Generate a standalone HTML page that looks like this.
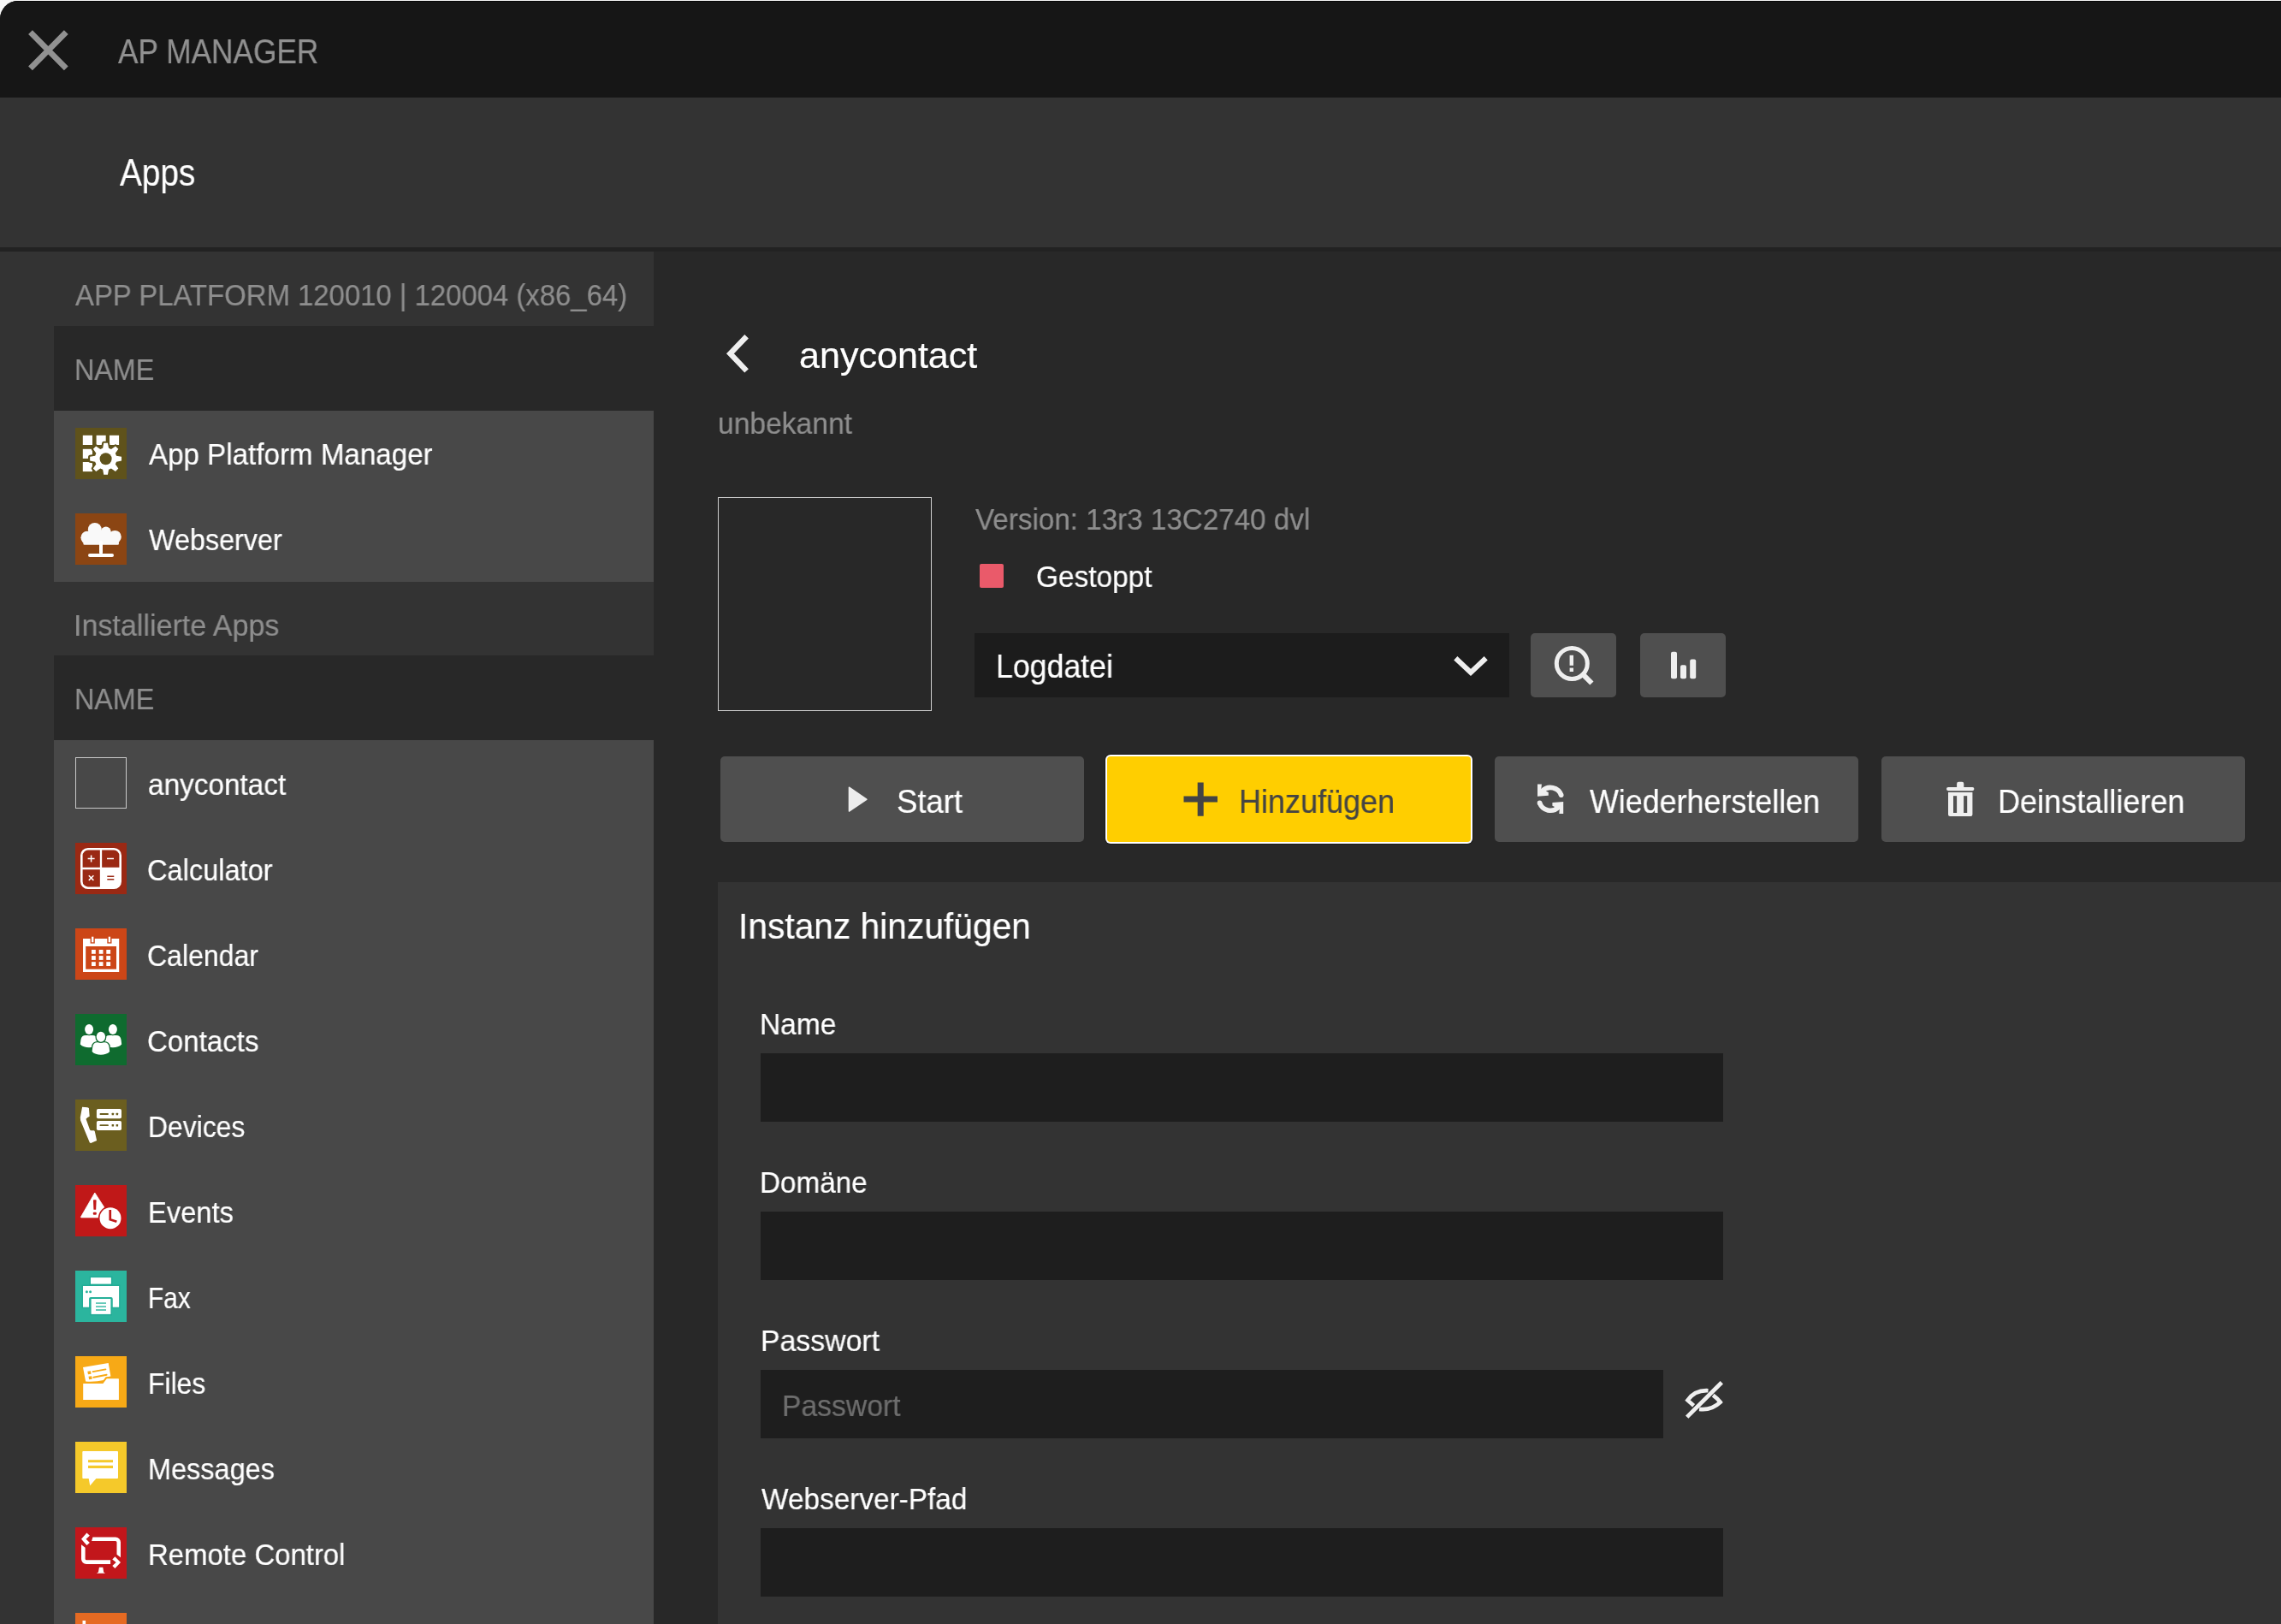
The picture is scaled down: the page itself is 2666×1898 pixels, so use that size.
<!DOCTYPE html><html lang="de"><head><meta charset="utf-8"><title>AP Manager</title><style>
html{background:#f7f7f7}
body{margin:0;width:2666px;height:1898px;overflow:hidden;position:relative;font-family:"Liberation Sans",sans-serif;background:#f7f7f7}
.win{position:absolute;left:0;top:1px;width:2666px;height:1897px;background:#282828;border-top-left-radius:21px;overflow:hidden}
.win header,.win nav,.win aside,.win main,.win section{display:contents}
.hdr,.bar,.sh,.gut,.sec,.nm,.rows{position:absolute}
.a{position:absolute}
.hdr{left:0;top:0;width:2666px;height:113px;background:#161616;box-shadow:inset 0 1px 0 #070707}
.bar{left:0;top:113px;width:2666px;height:175px;background:#333}
.sh{left:0;top:288px;width:2666px;height:5px;background:#222}
.gut{left:0;top:293px;width:63px;height:1610px;background:#333}
.sec{left:0;width:764px;background:#333}
.nm{left:63px;width:701px;background:#282828}
.rows{left:63px;width:701px;background:#484848}
.ic{position:absolute;left:88px;display:block}
.t{position:absolute;white-space:nowrap;line-height:1;transform-origin:0 0;will-change:transform;-webkit-text-stroke:.22px}
.btn{background:#4f4f4f;border-radius:5px}
.inp{background:#1e1e1e}
</style></head><body><div class="win">
<div class="hdr"></div><div class="bar"></div><div class="sh"></div><div class="gut"></div>
<header>
<svg class="a" style="left:33px;top:34px" width="48" height="48" viewBox="0 0 48 48"><path d="M2.5 2.7L44.3 44.8M44.3 2.7L2.5 44.8" stroke="#919191" stroke-width="6.8" fill="none"/></svg>
<span class="t" style="left:138.38px;top:39.81px;font-size:40.26px;color:#919191;transform:scaleX(0.8756)">AP MANAGER</span>
</header><nav><span class="t" style="left:139.68px;top:180.28px;font-size:43.60px;color:#ffffff;transform:scaleX(0.8893)">Apps</span>
</nav><aside>
<div class="sec" style="top:293px;height:87px"></div>
<div class="nm" style="top:380px;height:99px"></div>
<div class="rows" style="top:479px;height:200px"></div>
<div class="sec" style="left:63px;width:701px;top:679px;height:86px"></div>
<div class="nm" style="top:765px;height:99px"></div>
<div class="rows" style="top:864px;height:1040px"></div>
<svg class="ic" style="top:499px" viewBox="0 0 60 60" width="60" height="60"><rect width="60" height="60" fill="#5f521b"/><g fill="#fff"><rect x="8.8" y="8.8" width="11.2" height="11.2"/><rect x="24.6" y="8.8" width="11.1" height="11.2"/><rect x="40" y="8.8" width="11.1" height="11.2"/><rect x="8.8" y="24.8" width="11.2" height="11.1"/><rect x="8.8" y="40" width="11.2" height="11.1"/></g><path d="M32.15,23.77 L33.24,17.75 L37.96,17.75 L39.05,23.77 L41.95,24.97 L46.97,21.48 L50.32,24.83 L46.83,29.85 L48.03,32.75 L54.05,33.84 L54.05,38.56 L48.03,39.65 L46.83,42.55 L50.32,47.57 L46.97,50.92 L41.95,47.43 L39.05,48.63 L37.96,54.65 L33.24,54.65 L32.15,48.63 L29.25,47.43 L24.23,50.92 L20.88,47.57 L24.37,42.55 L23.17,39.65 L17.15,38.56 L17.15,33.84 L23.17,32.75 L24.37,29.85 L20.88,24.83 L24.23,21.48 L29.25,24.97Z" fill="#5f521b" stroke="#5f521b" stroke-width="4.2" stroke-linejoin="round"/><path d="M32.15,23.77 L33.24,17.75 L37.96,17.75 L39.05,23.77 L41.95,24.97 L46.97,21.48 L50.32,24.83 L46.83,29.85 L48.03,32.75 L54.05,33.84 L54.05,38.56 L48.03,39.65 L46.83,42.55 L50.32,47.57 L46.97,50.92 L41.95,47.43 L39.05,48.63 L37.96,54.65 L33.24,54.65 L32.15,48.63 L29.25,47.43 L24.23,50.92 L20.88,47.57 L24.37,42.55 L23.17,39.65 L17.15,38.56 L17.15,33.84 L23.17,32.75 L24.37,29.85 L20.88,24.83 L24.23,21.48 L29.25,24.97Z" fill="#fff"/><circle cx="35.6" cy="36.2" r="7" fill="#5f521b"/></svg>
<svg class="ic" style="top:599px" viewBox="0 0 60 60" width="60" height="60"><rect width="60" height="60" fill="#8b4513"/><g fill="#f9f9f9"><circle cx="14" cy="28.3" r="7.6"/><circle cx="22.8" cy="18.9" r="8"/><circle cx="35.8" cy="21.3" r="5.9"/><circle cx="46.3" cy="27.4" r="7.5"/><rect x="9.4" y="27" width="41.5" height="9.8" rx="1.3"/><rect x="20" y="20" width="20" height="12"/><rect x="12" y="26" width="36" height="8"/></g><g fill="#fff"><rect x="28" y="32" width="4" height="16" rx="2"/><rect x="15" y="46.9" width="30" height="4" rx="2"/></g></svg>
<div class="a" style="left:88px;top:884px;width:58px;height:58px;border:1px solid #c9c9c9"></div>
<svg class="ic" style="top:984px" viewBox="0 0 60 60" width="60" height="60"><rect width="60" height="60" fill="#9a2914"/><path d="M30 30H52.7V45.5a7.2 7.2 0 0 1-7.2 7.2H30Z" fill="#fff"/><rect x="7.3" y="7.3" width="45.4" height="45.4" rx="7.5" fill="none" stroke="#fff" stroke-width="2.6"/><path d="M30 7V53M7 30H53" stroke="#fff" stroke-width="2.3"/><path d="M14.6 18.6h8M18.6 14.6v8M37 18.6h8M15.8 38.3l5.6 5.6M21.4 38.3l-5.6 5.6" stroke="#fff" stroke-width="1.5" fill="none"/><path d="M37.3 39.2h8M37.3 42.8h8" stroke="#9a2914" stroke-width="1.6"/></svg>
<svg class="ic" style="top:1084px" viewBox="0 0 60 60" width="60" height="60"><rect width="60" height="60" fill="#cc4617"/><rect x="9" y="12" width="42.2" height="39" fill="#fff"/><rect x="12.2" y="21" width="35.8" height="26.7" fill="#cc4617"/><g fill="#fff"><rect x="19.0" y="25.0" width="4.8" height="4.8"/><rect x="27.7" y="25.0" width="4.8" height="4.8"/><rect x="36.3" y="25.0" width="4.8" height="4.8"/><rect x="19.0" y="32.1" width="4.8" height="4.8"/><rect x="27.7" y="32.1" width="4.8" height="4.8"/><rect x="36.3" y="32.1" width="4.8" height="4.8"/><rect x="19.0" y="39.2" width="4.8" height="4.8"/><rect x="27.7" y="39.2" width="4.8" height="4.8"/><rect x="36.3" y="39.2" width="4.8" height="4.8"/></g><rect x="17.6" y="9.6" width="5.2" height="8" fill="#cc4617"/><rect x="37.3" y="9.6" width="5.2" height="8" fill="#cc4617"/><rect x="19" y="9.7" width="2.4" height="6.6" fill="#fff"/><rect x="38.7" y="9.7" width="2.4" height="6.6" fill="#fff"/></svg>
<svg class="ic" style="top:1184px" viewBox="0 0 60 60" width="60" height="60"><rect width="60" height="60" fill="#0f6b2f"/><path d="M12.1 24.9C9.1 24.9 6.8 26.7 6.4 30.4L5.8 35.5C10.1 40.6 22.1 40.6 26.4 35.5L25.8 30.4C25.4 26.7 23.1 24.9 20.1 24.9Z" fill="#fff"/><ellipse cx="16.1" cy="18.0" rx="6.3" ry="7.3" fill="#0f6b2f"/><ellipse cx="16.1" cy="18.0" rx="5.0" ry="6.0" fill="#fff"/><path d="M39.9 24.9C36.9 24.9 34.6 26.7 34.2 30.4L33.6 35.5C37.9 40.6 49.9 40.6 54.2 35.5L53.6 30.4C53.2 26.7 50.9 24.9 47.9 24.9Z" fill="#fff"/><ellipse cx="43.9" cy="18.0" rx="6.3" ry="7.3" fill="#0f6b2f"/><ellipse cx="43.9" cy="18.0" rx="5.0" ry="6.0" fill="#fff"/><path d="M25.9 33.3C22.9 33.3 20.6 35.1 20.2 38.8L19.6 43.9C23.9 49.0 35.9 49.0 40.2 43.9L39.6 38.8C39.2 35.1 36.9 33.3 33.9 33.3Z" fill="#0f6b2f" stroke="#0f6b2f" stroke-width="2.6"/><path d="M25.9 33.3C22.9 33.3 20.6 35.1 20.2 38.8L19.6 43.9C23.9 49.0 35.9 49.0 40.2 43.9L39.6 38.8C39.2 35.1 36.9 33.3 33.9 33.3Z" fill="#fff"/><ellipse cx="29.9" cy="26.8" rx="6.5" ry="7.3" fill="#0f6b2f"/><ellipse cx="29.9" cy="26.8" rx="5.2" ry="6.0" fill="#fff"/></svg>
<svg class="ic" style="top:1284px" viewBox="0 0 60 60" width="60" height="60"><rect width="60" height="60" fill="#6b5e1f"/><path d="M8.1 8.8L14.2 9.2L15.9 10L16.7 19.7L14.4 21.1L12.5 22.8L16.9 34.9Q17.5 36.2 18.6 36.2H22L22.8 37.2L25.1 47.9L18.2 51.1L16.9 50.4L6.1 24.5L5.8 21.1Z" fill="#fff"/><g fill="#fff"><rect x="24.9" y="11.1" width="29.1" height="11.1" rx="1.8"/><rect x="24.9" y="24.9" width="29.1" height="11.1" rx="1.8"/></g><g fill="#6b5e1f"><rect x="28.5" y="16" width="10.4" height="1.9" rx=".9"/><rect x="28.5" y="29.2" width="10.4" height="1.9" rx=".9"/><rect x="42.6" y="15.7" width="2.5" height="2.5" rx=".5"/><rect x="47.6" y="15.7" width="2.5" height="2.5" rx=".5"/><rect x="42.6" y="28.9" width="2.5" height="2.5" rx=".5"/><rect x="47.6" y="28.9" width="2.5" height="2.5" rx=".5"/></g></svg>
<svg class="ic" style="top:1384px" viewBox="0 0 60 60" width="60" height="60"><rect width="60" height="60" fill="#c01818"/><path d="M22.8 9L6.5 37.2Q6.2 37.9 7 37.9H41.5Z" fill="#fff" stroke="#fff" stroke-width=".8" stroke-linejoin="round"/><path d="M21 17.9Q21 17.3 21.6 17.3H24Q24.6 17.3 24.6 17.9L24.2 28.3Q24.2 28.8 23.7 28.8H21.9Q21.4 28.8 21.4 28.3Z" fill="#c01818"/><rect x="20.8" y="31.7" width="4" height="3.1" rx="1" fill="#c01818"/><circle cx="41" cy="38.7" r="14.2" fill="#c01818"/><circle cx="41" cy="38.7" r="12.5" fill="#fff"/><path d="M40.75 29.1V40.2L48.4 42.8" fill="none" stroke="#c01818" stroke-width="2.7"/></svg>
<svg class="ic" style="top:1484px" viewBox="0 0 60 60" width="60" height="60"><rect width="60" height="60" fill="#2bb59e"/><g fill="none" stroke="#149f89" stroke-opacity=".33" stroke-width="3"><rect x="18" y="8.1" width="23.9" height="7.5"/><rect x="9" y="18" width="42.1" height="24.7"/><rect x="18.6" y="40" width="22.8" height="10.9"/></g><g fill="#fff"><rect x="18" y="8.1" width="23.9" height="7.5"/><rect x="9" y="18" width="42.1" height="24.7"/></g><path d="M16.1 42.9V33a2.1 2.1 0 0 1 2.1-2.1H41.6A2.1 2.1 0 0 1 43.7 33V42.9Z" fill="#2bb59e"/><path d="M16.1 42.9V33a2.1 2.1 0 0 1 2.1-2.1H41.6A2.1 2.1 0 0 1 43.7 33V42.9Z" fill="#149f89" fill-opacity=".22"/><rect x="18.6" y="33" width="22.8" height="17.9" fill="#fff"/><g fill="#2bb59e" fill-opacity=".8"><rect x="24" y="37.2" width="12" height="1.7"/><rect x="24" y="41.2" width="12" height="1.7"/><rect x="24" y="45.1" width="12" height="1.8"/></g><g fill="#2bb59e"><circle cx="13.4" cy="24.8" r="1.5"/><circle cx="17.6" cy="24.8" r="1.5"/></g></svg>
<svg class="ic" style="top:1584px" viewBox="0 0 60 60" width="60" height="60"><rect width="60" height="60" fill="#f7a916"/><path d="M9 13L38.7 7.9L41.4 23.6L35.4 24.5L33.1 28Q24 30.2 12.1 29.5Z" fill="#fff"/><path d="M20.5 18.1L35.4 15.4M21.3 24.7L36.6 21.7" stroke="#f7a916" stroke-width="1.9" stroke-linecap="round"/><path d="M14.3 17.8l3.6-.65.65 3.5-3.6.65ZM15.5 23.8l3.6-.65.65 3.5-3.6.65Z" fill="#f7a916"/><path d="M7.5 30.3H31.5L35.9 24.5H52.5V52.5H7.5Z" fill="#f7a916"/><path d="M9.2 32H32.4L36.8 26.2H50.3a.6.6 0 0 1 .6.6V50.9H9.2Z" fill="#fff"/></svg>
<svg class="ic" style="top:1684px" viewBox="0 0 60 60" width="60" height="60"><rect width="60" height="60" fill="#f5c92a"/><path d="M9.3 11H49a1 1 0 0 1 1 1V42a1 1 0 0 1-1 1H24.4L17.2 51.3L15.7 43H9.3a1 1 0 0 1-1-1V12a1 1 0 0 1 1-1Z" fill="#fff"/><rect x="15" y="21.2" width="29" height="3" fill="#f5c92a"/><rect x="15" y="27.8" width="29" height="3.2" fill="#f5c92a"/></svg>
<svg class="ic" style="top:1784px" viewBox="0 0 60 60" width="60" height="60"><rect width="60" height="60" fill="#c2161b"/><g fill="#fff"><path d="M13.4 6.6L16.9 9.7L12.5 13.8L16.9 18L13.4 21.1L7 13.8Z"/><path d="M20.4 11.4H47A6 6 0 0 1 53 17.4V35.2L48.5 31.7V17.4A1.5 1.5 0 0 0 47 15.9H19.1Z"/><path d="M7 20.3L11.6 23.8V36.8A1.5 1.5 0 0 0 13.1 38.3H41.1V43H13A6 6 0 0 1 7 37Z"/><path d="M46.4 34.3L43.3 37.4L47.7 41L43.3 44.9L46.4 48L53 41Z"/><path d="M27.9 46.7H32.3L33.2 52.4L35 53.7H24.8L26.9 52.4Z"/></g></svg>
<svg class="ic" style="top:1884px" viewBox="0 0 60 60" width="60" height="60"><rect width="60" height="60" fill="#e56a22"/><rect x="8.5" y="9" width="3.6" height="40" fill="#fff"/></svg>
<span class="t" style="left:88.19px;top:326.69px;font-size:34.74px;color:#8e8e8e;transform:scaleX(0.9465)">APP PLATFORM 120010 | 120004 (x86_64)</span>
<span class="t" style="left:87.28px;top:414.03px;font-size:34.45px;color:#8e8e8e;transform:scaleX(0.9376)">NAME</span>
<span class="t" style="left:173.99px;top:512.63px;font-size:34.45px;color:#ffffff;transform:scaleX(0.9626)">App Platform Manager</span>
<span class="t" style="left:174.46px;top:612.63px;font-size:34.45px;color:#ffffff;transform:scaleX(0.9387)">Webserver</span>
<span class="t" style="left:85.83px;top:712.69px;font-size:34.74px;color:#8e8e8e;transform:scaleX(0.9807)">Installierte Apps</span>
<span class="t" style="left:87.28px;top:799.33px;font-size:34.45px;color:#8e8e8e;transform:scaleX(0.9376)">NAME</span>
<span class="t" style="left:172.64px;top:898.53px;font-size:34.45px;color:#ffffff;transform:scaleX(0.9680)">anycontact</span>
<span class="t" style="left:172.02px;top:998.63px;font-size:34.45px;color:#ffffff;transform:scaleX(0.9456)">Calculator</span>
<span class="t" style="left:172.05px;top:1098.73px;font-size:34.45px;color:#ffffff;transform:scaleX(0.9303)">Calendar</span>
<span class="t" style="left:172.00px;top:1198.63px;font-size:34.45px;color:#ffffff;transform:scaleX(0.9601)">Contacts</span>
<span class="t" style="left:173.01px;top:1298.63px;font-size:34.45px;color:#ffffff;transform:scaleX(0.9256)">Devices</span>
<span class="t" style="left:172.95px;top:1398.73px;font-size:34.45px;color:#ffffff;transform:scaleX(0.9495)">Events</span>
<span class="t" style="left:173.17px;top:1498.63px;font-size:34.45px;color:#ffffff;transform:scaleX(0.8647)">Fax</span>
<span class="t" style="left:173.01px;top:1598.63px;font-size:34.45px;color:#ffffff;transform:scaleX(0.9246)">Files</span>
<span class="t" style="left:172.96px;top:1698.63px;font-size:34.45px;color:#ffffff;transform:scaleX(0.9426)">Messages</span>
<span class="t" style="left:172.83px;top:1798.83px;font-size:34.45px;color:#ffffff;transform:scaleX(0.9557)">Remote Control</span>
</aside><main>
<svg class="a" style="left:840px;top:384px" width="44" height="56" viewBox="840 385 44 56"><path d="M872.6 393.2L853.4 413.3L872.6 433.4" stroke="#efefef" stroke-width="6.4" fill="none"/></svg>
<div class="a" style="left:839px;top:580px;width:248px;height:248px;border:1px solid #cfcfcf"></div>
<div class="a" style="left:1145px;top:658px;width:28px;height:28px;background:#ea5a6a;border-radius:2px"></div>
<div class="a" style="left:1139px;top:739px;width:625px;height:75px;background:#1c1c1c"></div>
<svg class="a" style="left:1690px;top:756px" width="60" height="40" viewBox="1690 757 60 40"><path d="M1701.3 769.3L1719 786L1736.7 769.3" stroke="#efefef" stroke-width="6" fill="none"/></svg>
<div class="a btn" style="left:1789px;top:739px;width:100px;height:75px"></div>
<div class="a btn" style="left:1917px;top:739px;width:100px;height:75px"></div>
<svg class="a" style="left:1789px;top:739px" width="100" height="75" viewBox="1789 740 100 75"><g fill="none" stroke="#efefef"><circle cx="1837.3" cy="775.4" r="18" stroke-width="5"/><path d="M1849.8 787.9L1860.4 798.5" stroke-width="6"/></g><rect x="1834.6" y="765.8" width="4.4" height="12" fill="#efefef"/><rect x="1834.6" y="780.6" width="4.4" height="4.4" fill="#efefef"/></svg>
<svg class="a" style="left:1917px;top:739px" width="100" height="75" viewBox="1917 740 100 75"><g fill="#efefef"><rect x="1953" y="761.8" width="7" height="31.4" rx="2"/><rect x="1964" y="777.2" width="7" height="16" rx="2"/><rect x="1975.2" y="770.6" width="7" height="22.6" rx="2"/></g></svg>
<div class="a btn" style="left:842px;top:883px;width:425px;height:100px"></div>
<div class="a btn" style="left:1747px;top:883px;width:425px;height:100px"></div>
<div class="a btn" style="left:2199px;top:883px;width:425px;height:100px"></div>
<div class="a" style="left:1294px;top:883px;width:425px;height:100px;background:#ffce00;border-radius:4px;box-shadow:0 0 0 2px #fff,0 0 0 3px #1b1b1b"></div>
<svg class="a" style="left:985px;top:913px" width="40" height="40" viewBox="985 914 40 40"><path d="M993.2 919.8L1013.2 933.4Q1014.3 934.2 1013.2 935L993.2 948.6Q991.7 949.5 991.7 947.8V920.6Q991.7 918.9 993.2 919.8Z" fill="#ededed"/></svg>
<svg class="a" style="left:1380px;top:909px" width="48" height="48" viewBox="1380 910 48 48"><path d="M1383.5 934.1H1423M1403.2 914.5V953.7" stroke="#444" stroke-width="7" fill="none"/></svg>
<svg class="a" style="left:1790px;top:908px" width="46" height="50" viewBox="1790 909 46 50"><g fill="none" stroke="#efefef" stroke-width="5.6" stroke-linecap="round"><path d="M1824.7 929.3A13.4 13.4 0 0 0 1802.6 924.4" stroke-linecap="butt"/><path d="M1824.7 929.3v0"/><path d="M1799.5 938.4A13.4 13.4 0 0 0 1821.6 943.3" stroke-linecap="butt"/><path d="M1799.5 938.4v0"/></g><path d="M1797 916.6H1801.9L1801.4 922L1809.8 926V929.8L1797 930.8Z M1827.2 951.1H1822.3L1822.8 945.7L1814.4 941.7V937.9L1827.2 936.9Z" fill="#efefef"/></svg>
<svg class="a" style="left:2270px;top:909px" width="44" height="48" viewBox="2270 910 44 48"><g fill="#efefef"><rect x="2275" y="920" width="32.4" height="4.2" rx="2.1"/><path d="M2287.1 921V916a2.2 2.2 0 0 1 2.2-2.2h3.8a2.2 2.2 0 0 1 2.2 2.2V921Z"/><path d="M2277 925.9H2305.4V952a2.1 2.1 0 0 1-2.1 2.1H2279.1a2.1 2.1 0 0 1-2.1-2.1Z"/></g><rect x="2283" y="930.2" width="4.1" height="19.8" fill="#4f4f4f"/><rect x="2295.1" y="930.2" width="4.1" height="19.8" fill="#4f4f4f"/></svg>
<div class="a" style="left:839px;top:1030px;width:1830px;height:880px;background:#333"></div>
<div class="a inp" style="left:889px;top:1230px;width:1125px;height:80px"></div>
<div class="a inp" style="left:889px;top:1415px;width:1125px;height:80px"></div>
<div class="a inp" style="left:889px;top:1600px;width:1055px;height:80px"></div>
<div class="a inp" style="left:889px;top:1785px;width:1125px;height:80px"></div>
<svg class="a" style="left:1962px;top:1607px" width="60" height="56" viewBox="1962 1608 60 56"><path d="M1996.5 1625.2Q1981 1624.3 1972.4 1636.5L1979.6 1642.8M2002.2 1630.6Q2007.5 1634.5 2010.7 1638.7Q2000 1648.7 1986.1 1646.9" fill="none" stroke="#efefef" stroke-width="4.6" stroke-linejoin="miter" stroke-miterlimit="10"/><path d="M1971.7 1656.1L2012.3 1615.8" stroke="#efefef" stroke-width="4.8"/></svg>
<span class="t" style="left:933.97px;top:394.11px;font-size:42.15px;color:#ffffff;transform:scaleX(1.0221)">anycontact</span>
<span class="t" style="left:838.91px;top:477.03px;font-size:34.45px;color:#8e8e8e;transform:scaleX(0.9761)">unbekannt</span>
<span class="t" style="left:1140.24px;top:589.23px;font-size:34.45px;color:#8e8e8e;transform:scaleX(0.9641)">Version: 13r3 13C2740 dvl</span>
<span class="t" style="left:1211.20px;top:655.93px;font-size:34.45px;color:#ffffff;transform:scaleX(0.9691)">Gestoppt</span>
<span class="t" style="left:1163.52px;top:759.39px;font-size:38.52px;color:#ffffff;transform:scaleX(0.9267)">Logdatei</span>
<span class="t" style="left:1047.73px;top:917.03px;font-size:38.23px;color:#ffffff;transform:scaleX(0.9551)">Start</span>
<span class="t" style="left:1448.48px;top:917.03px;font-size:38.23px;color:#444444;transform:scaleX(0.9424)">Hinzufügen</span>
<span class="t" style="left:1858.46px;top:917.03px;font-size:38.23px;color:#ffffff;transform:scaleX(0.9384)">Wiederherstellen</span>
<span class="t" style="left:2334.98px;top:917.03px;font-size:38.23px;color:#ffffff;transform:scaleX(0.9440)">Deinstallieren</span>

<section>
<span class="t" style="left:863.08px;top:1061.31px;font-size:42.15px;color:#ffffff;transform:scaleX(0.9663)">Instanz hinzufügen</span>
<span class="t" style="left:887.78px;top:1179.03px;font-size:34.45px;color:#ffffff;transform:scaleX(0.9725)">Name</span>
<span class="t" style="left:887.80px;top:1364.13px;font-size:34.45px;color:#ffffff;transform:scaleX(0.9655)">Domäne</span>
<span class="t" style="left:888.66px;top:1549.13px;font-size:34.45px;color:#ffffff;transform:scaleX(0.9819)">Passwort</span>
<span class="t" style="left:890.46px;top:1734.13px;font-size:34.45px;color:#ffffff;transform:scaleX(0.9689)">Webserver-Pfad</span>
<span class="t" style="left:914.07px;top:1625.03px;font-size:34.45px;color:#6e6e6e;transform:scaleX(0.9783)">Passwort</span>

</section></main>
</div></body></html>
